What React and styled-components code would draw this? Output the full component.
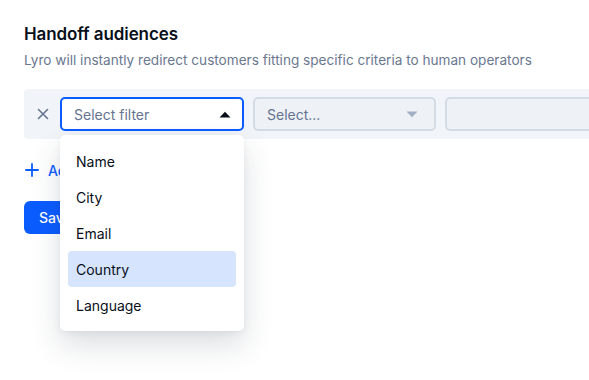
import React from "react";
import styled, { createGlobalStyle } from "styled-components";

const Global = createGlobalStyle`
  html, body { margin: 0; padding: 0; background: #fff; }
  body { font-family: Inter, "Open Sans", sans-serif; color: #080f1a; }
  * { box-sizing: border-box; }
`;

const Page = styled.div`
  width: 589px;
  height: 380px;
  overflow: hidden;
  padding: 24px 0 0 24px;
  display: flex;
  flex-direction: column;
`;

const Title = styled.h2`
  margin: 0;
  font-size: 17px;
  font-weight: 600;
  line-height: 20px;
  letter-spacing: -0.1px;
  color: #080f1a;
`;

const Subtitle = styled.p`
  margin: 7px 0 0;
  font-size: 13.6px;
  line-height: 18px;
  color: #6a7890;
`;

const FilterRow = styled.div`
  margin-top: 20px;
  height: 50px;
  background: #f1f4f8;
  border-radius: 4px 0 0 4px;
  display: flex;
  align-items: center;
  padding-left: 10px;
  gap: 9px;
  position: relative;
`;

const RemoveBtn = styled.button`
  flex: none;
  border: 0;
  background: none;
  padding: 0;
  width: 17px;
  height: 17px;
  display: flex;
  align-items: center;
  justify-content: center;
  color: #647491;
`;

const SelectBox = styled.div`
  width: ${(p) => p.$w}px;
  flex: none;
  height: 34px;
  border-radius: 5px;
  border: ${(p) => (p.$active ? "2px solid #0b5cff" : "2px solid #d3dbe5")};
  background: ${(p) => (p.$active ? "#fff" : "#eef1f6")};
  display: flex;
  align-items: center;
  justify-content: space-between;
  padding: 0 ${(p) => (p.$active ? 11 : 16)}px 0 12px;
  font-size: 14px;
  color: #647491;
`;

const Menu = styled.div`
  position: absolute;
  left: 36px;
  top: 46px;
  width: 184px;
  background: #fff;
  border-radius: 5px;
  box-shadow: 0 14px 30px rgba(40, 50, 70, 0.16), 0 2px 6px rgba(40, 50, 70, 0.06);
  padding: 8px;
  display: flex;
  flex-direction: column;
  z-index: 5;
`;

const MenuItem = styled.div`
  height: 36px;
  border-radius: 4px;
  display: flex;
  align-items: center;
  padding-left: 8px;
  font-size: 14px;
  color: #080f1a;
  background: ${(p) => (p.$hl ? "#d6e4fd" : "transparent")};
`;

const AddLink = styled.div`
  margin-top: 22px;
  display: flex;
  align-items: center;
  gap: 8px;
  color: #0b5cff;
  font-size: 14px;
  font-weight: 500;
  height: 18px;
`;

const SaveButton = styled.button`
  margin-top: 22px;
  width: 76px;
  height: 33px;
  border: 0;
  border-radius: 6px;
  background: #0b5cff;
  color: #fff;
  font-family: inherit;
  font-size: 14px;
  font-weight: 500;
  text-align: left;
  padding-left: 15px;
`;

const Caret = ({ up, color }) => (
  <svg width="12" height="7" viewBox="0 0 12 7">
    {up ? (
      <path d="M0.5 6.5 L6 0.8 L11.5 6.5 Z" fill={color} />
    ) : (
      <path d="M0.5 0.5 L6 6.2 L11.5 0.5 Z" fill={color} />
    )}
  </svg>
);

export default function App() {
  const items = ["Name", "City", "Email", "Country", "Language"];
  return (
    <>
      <Global />
      <Page>
        <Title>Handoff audiences</Title>
        <Subtitle>
          Lyro will instantly redirect customers fitting specific criteria to human operators
        </Subtitle>
        <FilterRow>
          <RemoveBtn aria-label="remove">
            <svg width="12" height="12" viewBox="0 0 12 12">
              <path d="M1.5 1.5 L10.5 10.5 M10.5 1.5 L1.5 10.5" stroke="#647491" strokeWidth="1.6" strokeLinecap="round" />
            </svg>
          </RemoveBtn>
          <SelectBox $active $w={184}>
            <span>Select filter</span>
            <Caret up color="#080f1a" />
          </SelectBox>
          <SelectBox $w={183}>
            <span>Select...</span>
            <Caret color="#a3afc2" />
          </SelectBox>
          <SelectBox $w={200} />
          <Menu>
            {items.map((it) => (
              <MenuItem key={it} $hl={it === "Country"}>
                {it}
              </MenuItem>
            ))}
          </Menu>
        </FilterRow>
        <AddLink>
          <svg width="16" height="16" viewBox="0 0 16 16">
            <path d="M8 2 V14 M2 8 H14" stroke="#0b5cff" strokeWidth="1.8" strokeLinecap="round" />
          </svg>
          <span>Add filter</span>
        </AddLink>
        <SaveButton>Save</SaveButton>
      </Page>
    </>
  );
}
